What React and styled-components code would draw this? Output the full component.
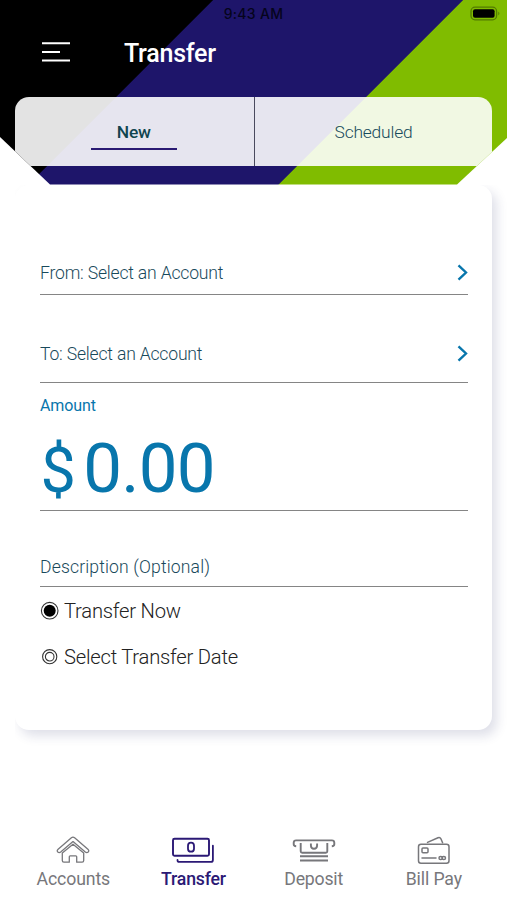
import React from "react";
import styled, { createGlobalStyle } from "styled-components";

const GlobalStyle = createGlobalStyle`
  * { box-sizing: border-box; }
  body { margin: 0; background: #fff; font-family: Roboto, "Liberation Sans", sans-serif; }
`;

const Screen = styled.div`
  width: 507px;
  height: 900px;
  display: flex;
  flex-direction: column;
  overflow: hidden;
  background: #fff;
`;

const Header = styled.header`
  height: 185px;
  flex: none;
  display: flex;
  flex-direction: column;
  background: linear-gradient(135deg, #000 150.4px, #1e156a 151px, #1e156a 327.2px, #80bc00 327.8px);
  clip-path: polygon(0 0, 507px 0, 507px 138px, 457px 184.6px, 50px 184.6px, 0 137px);
`;

const StatusBar = styled.div`
  height: 28px;
  display: grid;
  grid-template-columns: 1fr auto 1fr;
  align-items: center;
  padding: 0 6px 0 0;
  color: #05041c;
`;

const Clock = styled.span`
  grid-column: 2;
  font: 500 14px/16px Inter, sans-serif;
  letter-spacing: 0.3px;
  padding-left: 6px;
`;

const Battery = styled.svg`
  justify-self: end;
  margin-top: -2px;
`;

const TitleBar = styled.div`
  height: 69px;
  display: flex;
  align-items: flex-start;
  padding: 10px 0 0 42px;
`;

const MenuButton = styled.button`
  width: 82px;
  height: 28px;
  padding: 0;
  border: 0;
  background: none;
  text-align: left;
`;

const Title = styled.h1`
  margin: 0;
  color: #fff;
  font-size: 25px;
  line-height: 31px;
  font-weight: 500;
  letter-spacing: -0.25px;
`;

const Tabs = styled.nav`
  height: 69px;
  margin: 0.4px 15px 0;
  display: grid;
  grid-template-columns: 240px 1fr;
  border-radius: 14px 14px 0 0;
  background: rgba(255, 255, 255, 0.89);
`;

const Tab = styled.button`
  border: 0;
  border-right: ${(p) => (p.$active ? "1px solid #4a4a5e" : "0")};
  background: none;
  padding: ${(p) => (p.$active ? "23px 1.5px 0 0" : "23px 0 0")};
  display: flex;
  flex-direction: column;
  align-items: center;
  font-family: inherit;
  font-size: 17.4px;
  line-height: 24px;
  font-weight: ${(p) => (p.$active ? 500 : 300)};
  letter-spacing: -0.2px;
  color: ${(p) => (p.$active ? "#10454f" : "#164a5c")};
`;

const TabMarker = styled.span`
  width: 86px;
  height: 2px;
  margin-top: 4px;
  background: #2a1a73;
`;

const Card = styled.main`
  height: 545px;
  flex: none;
  margin: 0 15px;
  padding: 63px 24px 0 25px;
  border-radius: 14px;
  background: #fff;
  box-shadow: 5px 6px 11px rgba(40, 45, 110, 0.15);
  clip-path: inset(0 -15px -25px 0);
`;

const Field = styled.div`
  height: ${(p) => p.$height}px;
  padding-top: ${(p) => p.$top}px;
  border-bottom: 1.4px solid #858585;
  display: flex;
  justify-content: space-between;
  align-items: flex-start;
`;

const FieldLabel = styled.span`
  color: #18495b;
  font-size: 17.6px;
  line-height: 24px;
  font-weight: 300;
  letter-spacing: ${(p) => p.$track ?? -0.2}px;
`;

const Chevron = styled.svg`
  margin-top: 3px;
  flex: none;
`;

const AmountField = styled.div`
  height: 128px;
  padding-top: 11px;
  border-bottom: 1.4px solid #858585;
  color: #0876ac;
`;

const AmountLabel = styled.div`
  font-size: 16px;
  line-height: 24px;
  letter-spacing: -0.1px;
`;

const AmountValue = styled.div`
  display: flex;
  align-items: baseline;
  margin-top: 11px;
  font-size: 69px;
  line-height: 80px;
  letter-spacing: -0.8px;
`;

const Currency = styled.span`
  width: 43.3px;
  padding-left: 0.5px;
  font-size: 63px;
`;

const Option = styled.label`
  height: 46.5px;
  padding-top: 1px;
  display: flex;
  align-items: center;
  gap: 5px;
  color: #222;
  font-size: 20.2px;
  font-weight: 300;
  letter-spacing: -0.22px;
`;

const BottomBar = styled.nav`
  margin-top: auto;
  height: 69px;
  flex: none;
  display: grid;
  grid-template-columns: repeat(4, 120.2px);
  padding-left: 13.2px;
`;

const NavItem = styled.button`
  border: 0;
  padding: 0;
  background: none;
  display: flex;
  flex-direction: column;
  align-items: center;
  font-family: inherit;
  font-size: 17.7px;
  line-height: 24px;
  font-weight: ${(p) => (p.$active ? 500 : 400)};
  color: ${(p) => (p.$active ? "#2b1975" : "#77777b")};
  letter-spacing: ${(p) => p.$track}px;
`;

const NavIcon = styled.svg`
  width: 46px;
  height: 36px;
  fill: none;
  stroke: currentColor;
  stroke-width: 1.5;
  stroke-linecap: round;
  stroke-linejoin: round;
`;

function Arrow() {
  return (
    <Chevron width="11" height="17" viewBox="0 0 11 17" fill="none" stroke="#0876ac" strokeWidth="2.4">
      <path d="M1.5 1.3 9 8.5 1.5 15.7" />
    </Chevron>
  );
}

function Radio({ checked }) {
  return (
    <svg width="19" height="20" viewBox="0 0 19 20" fill="none" stroke="#333">
      {checked ? (
        <>
          <circle cx="9.7" cy="9.7" r="8.3" strokeWidth="1.1" />
          <circle cx="9.7" cy="9.7" r="6" fill="#000" stroke="none" />
        </>
      ) : (
        <>
          <circle cx="9.7" cy="9.7" r="7.1" strokeWidth="1.1" />
          <circle cx="9.7" cy="9.7" r="4.3" strokeWidth="1.1" />
        </>
      )}
    </svg>
  );
}

const navItems = [
  {
    label: "Accounts",
    track: -0.12,
    icon: (
      <>
        <path d="M8.1 18.2 21.4 6.8q1.6-1.3 3.2 0l13.3 11.4q1.6 1.4.3 2.8-1.4 1.2-2.9 0L23 10.6 10.7 21q-1.5 1.2-2.9 0-1.3-1.4.3-2.8Z" strokeWidth="1.3" />
        <path d="M12.3 22v7.6q0 1.6 1.6 1.6h5.4v-5.4q0-.9.9-.9h5.6q.9 0 .9.9v5.4h5.4q1.6 0 1.6-1.6V22L23 13.2Z" strokeWidth="1.3" />
      </>
    ),
  },
  {
    label: "Transfer",
    active: true,
    track: -0.2,
    icon: (
      <>
        <rect x="3" y="7.7" width="36" height="17" rx="1.5" strokeWidth="1.9" />
        <rect x="18" y="11.7" width="6" height="9" rx="3" strokeWidth="1.8" />
        <path d="M42.9 14.7v14.2q0 2-2 2H9q-1.5 0-1.5-2" strokeWidth="1.8" />
      </>
    ),
  },
  {
    label: "Deposit",
    track: -0.22,
    icon: (
      <>
        <path d="M5.2 15.3q-2.5-.2-2.5-2v-1.5q0-2.4 2.4-2.4h35.8q2.4 0 2.4 2.4v1.5q0 1.8-2.5 2" strokeWidth="1.9" strokeLinecap="butt" />
        <path d="M9.7 12v8.3q0 1.5 1.5 1.5h23.6q1.5 0 1.5-1.5V12M19.9 12.6v2q0 3.2 3.1 3.2t3.1-3.2v-2M9 25.3h28M9 29.5h28" strokeWidth="1.9" strokeLinecap="butt" />
      </>
    ),
  },
  {
    label: "Bill Pay",
    track: -0.12,
    icon: (
      <>
        <rect x="7.5" y="13.3" width="30.5" height="18.9" rx="2.5" />
        <path d="M16.5 11.4 27 6.8q2-.8 2.9 1l1.7 3.9M11 27h14" />
        <rect x="11" y="17" width="6" height="4.7" rx="1" />
        <rect x="28" y="25.4" width="3.5" height="3.2" rx="1.6" />
        <rect x="31" y="25.4" width="3.5" height="3.2" rx="1.6" />
      </>
    ),
  },
];

export default function App() {
  return (
    <Screen>
      <GlobalStyle />
      <Header>
        <StatusBar>
          <Clock>9:43 AM</Clock>
          <Battery width="32" height="15" viewBox="0 0 32 15">
            <rect x="2" y="1.2" width="25.6" height="12.6" rx="4" fill="none" stroke="#527b00" strokeWidth="1.3" />
            <rect x="4" y="3.2" width="21.6" height="8.6" rx="2" fill="#000" />
            <path d="M29.3 5.5q2.2 2 0 4Z" fill="#527b00" />
          </Battery>
        </StatusBar>
        <TitleBar>
          <MenuButton aria-label="Menu">
            <svg width="28" height="28" viewBox="0 0 28 28" stroke="#fff" strokeWidth="1.9">
              <path d="M0 5.3h28M0 14h18M0 22.5h28" />
            </svg>
          </MenuButton>
          <Title>Transfer</Title>
        </TitleBar>
        <Tabs>
          <Tab $active>
            New
            <TabMarker />
          </Tab>
          <Tab>Scheduled</Tab>
        </Tabs>
      </Header>
      <Card>
        <Field $height={47} $top={13}>
          <FieldLabel>From: Select an Account</FieldLabel>
          <Arrow />
        </Field>
        <Field $height={88} $top={46.5}>
          <FieldLabel>To: Select an Account</FieldLabel>
          <Arrow />
        </Field>
        <AmountField>
          <AmountLabel>Amount</AmountLabel>
          <AmountValue>
            <Currency>$</Currency>
            <span>0.00</span>
          </AmountValue>
        </AmountField>
        <Field $height={76} $top={43.5}>
          <FieldLabel $track={0.13}>Description (Optional)</FieldLabel>
        </Field>
        <Option>
          <Radio checked />
          Transfer Now
        </Option>
        <Option>
          <Radio />
          Select Transfer Date
        </Option>
      </Card>
      <BottomBar>
        {navItems.map((item) => (
          <NavItem key={item.label} $active={item.active} $track={item.track}>
            <NavIcon viewBox="0 0 46 36">{item.icon}</NavIcon>
            {item.label}
          </NavItem>
        ))}
      </BottomBar>
    </Screen>
  );
}
